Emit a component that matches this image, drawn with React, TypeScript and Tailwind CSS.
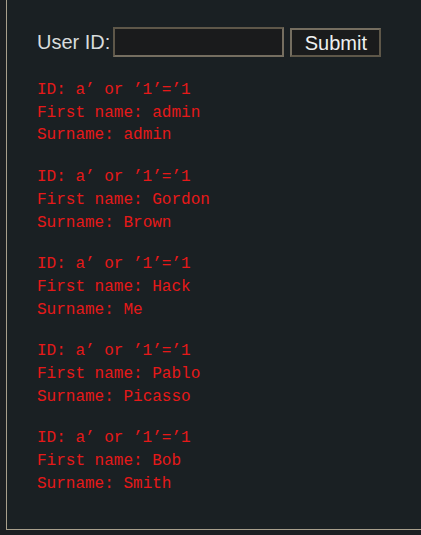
import React from 'react';

const rows = [
  { first: 'admin', last: 'admin' },
  { first: 'Gordon', last: 'Brown' },
  { first: 'Hack', last: 'Me' },
  { first: 'Pablo', last: 'Picasso' },
  { first: 'Bob', last: 'Smith' },
];

export default function App() {
  return (
    <div className="min-h-screen w-[421px] overflow-hidden bg-[#1c1f22]">
      <div className="ml-[6px] w-[440px] border-l border-b border-[#a89f8c] bg-[#1a2023] pl-[30px] pt-[27px] pb-[33px]">
        <form
          className="flex items-center font-['Liberation_Sans',Arial,sans-serif] text-[20px] text-[#d8dcdc]"
          onSubmit={(e) => e.preventDefault()}
        >
          <label className="mr-[3px]">User ID:</label>
          <input
            type="text"
            className="h-[30px] w-[171px] border-2 border-t-[#5e5749] border-l-[#5e5749] border-r-[#756e60] border-b-[#756e60] bg-[#1a1b1c] outline-none"
          />
          <button
            type="submit"
            className="ml-[6px] mt-[1px] h-[29px] w-[91px] border-2 border-t-[#756e60] border-l-[#756e60] border-r-[#5e5749] border-b-[#5e5749] bg-[#1a1b1c] leading-none text-[#eef0f0]"
          >
            Submit
          </button>
        </form>

        <div className="mt-[22px] space-y-[19px] text-[16px] leading-[22.7px] text-[#e61919]">
          {rows.map((r, i) => (
            <pre key={i} className="font-['Liberation_Mono','Courier_New',monospace]">
              ID: a’ or ’1’=’1{'\n'}First name: {r.first}{'\n'}Surname: {r.last}
            </pre>
          ))}
        </div>
      </div>
    </div>
  );
}
